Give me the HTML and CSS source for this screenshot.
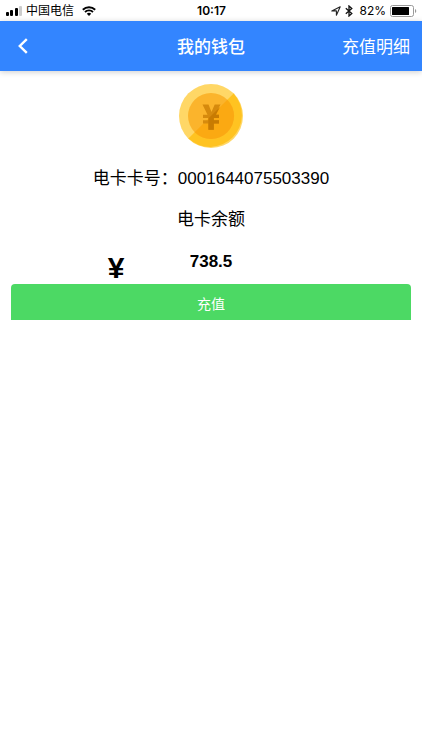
FILE: index.html
```html
<!DOCTYPE html>
<html lang="zh-CN">
<head>
  <meta charset="UTF-8">
  <meta name="viewport" content="width=device-width, initial-scale=1.0">
  <title>我的钱包</title>
  <link rel="stylesheet" href="styles.css">
</head>
<body>
  <div class="status-bar">
    <div class="status-left">
      <svg class="signal" width="17" height="10" viewBox="0 0 17 10">
        <rect x="0" y="6" width="3" height="4" rx="1"/>
        <rect x="4" y="4" width="3" height="6" rx="1"/>
        <rect x="9" y="2" width="3" height="8" rx="1"/>
        <rect x="13" y="0" width="3" height="10" rx="1" fill="#ccc"/>
      </svg>
      <span class="carrier">中国电信</span>
      <svg width="14" height="10" viewBox="0 0 14 10">
        <path d="M0.8 3.7a9 9 0 0 1 12.4 0M3 6a5.8 5.8 0 0 1 8 0" fill="none" stroke="#000" stroke-width="1.9"/>
        <path d="M7 10 4.8 7.7a3.2 3.2 0 0 1 4.4 0z"/>
      </svg>
    </div>
    <span class="time">10:17</span>
    <div class="status-right">
      <svg width="10" height="10" viewBox="0 0 10 10">
        <path d="M0.8 4.9 9.2 0.8 5.4 9.2V4.9z" fill="none" stroke="#222" stroke-width="1.1" stroke-linejoin="round"/>
      </svg>
      <svg class="bluetooth" width="8" height="12" viewBox="0 0 8 12">
        <path d="M0.8 3.3 6.8 8.5 4 11V1l2.8 2.5-6 5.2" fill="none" stroke="#111" stroke-width="1.3"/>
      </svg>
      <span class="percent">82%</span>
      <svg width="27" height="12" viewBox="0 0 27 12">
        <rect x="0.5" y="0.5" width="23" height="11" rx="2" fill="none" stroke="#999"/>
        <rect x="2" y="2" width="17" height="8" rx="0.5"/>
        <path d="M25 4a2.2 2.2 0 0 1 0 4z" fill="#999"/>
      </svg>
    </div>
  </div>

  <header class="nav">
    <button class="back" type="button" aria-label="返回">
      <svg width="10" height="16" viewBox="0 0 10 16">
        <path d="M8.8 1.2 1.8 8l7 6.8" fill="none" stroke="#fff" stroke-width="2.4"/>
      </svg>
    </button>
    <h1>我的钱包</h1>
    <a class="detail" href="#">充值明细</a>
  </header>

  <main class="wallet">
    <svg class="coin" width="64" height="64" viewBox="0 0 64 64">
      <circle cx="32" cy="32" r="32" fill="#ffd766"/>
      <path d="M54.6 9.4A32 32 0 0 1 9.4 54.6z" fill="#ffc321"/>
      <circle cx="32" cy="32" r="23" fill="#fbb42c"/>
      <path d="M48.3 15.7A23 23 0 0 1 15.7 48.3z" fill="#fba912"/>
      <path d="M23.5 20.5h6l3 7.5 3.2-7.5h5.8l-5.3 10.2H40v3.2h-5.2v2.3H40v3.3h-5.2v6.3h-5.4v-6.3H24v-3.3h5.4v-2.3H24v-3.2h4.5z" fill="#d68a0d"/>
      <path d="M41 23 37 30.7H40v3.2h-5.2v2.3H40v3.3h-5.2v6.3h-5.4V34.6z" fill="#c87b02"/>
    </svg>
    <p>电卡卡号：0001644075503390</p>
    <p>电卡余额</p>
    <div class="balance">
      <span class="currency">¥</span>
      <strong>738.5</strong>
    </div>
    <button class="recharge" type="button">充值</button>
  </main>
</body>
</html>
```

FILE: styles.css
```css
* { box-sizing: border-box; }
body { margin: 0; background: #fff; color: #000; font-family: "Liberation Sans", "Noto Sans CJK SC", sans-serif; font-size: 17px; }
button { border: 0; font-family: inherit; cursor: pointer; }
svg { display: block; flex-shrink: 0; }

.status-bar { display: grid; grid-template-columns: 1fr auto 1fr; align-items: center; height: 21px; padding: 0 5px 0 6px; font-family: Inter, "Noto Sans CJK SC", sans-serif; font-size: 12px; line-height: 20px; }
.status-left, .status-right { display: flex; align-items: center; }
.status-right { justify-content: flex-end; gap: 4px; }
.carrier { margin: 0 8px 0 3px; }
.percent { margin-left: 2px; }
.time { font-weight: 600; }

.nav { display: grid; grid-template-columns: 1fr auto 1fr; align-items: center; height: 50px; padding: 0 12px 2px; background: #3385ff; color: #fff; box-shadow: 0 1px 6px rgba(0,0,0,0.2); }
.nav h1 { margin: 0; font-size: 17px; font-weight: 500; }
.back { justify-self: start; padding: 8px 6px 6px; background: none; }
.detail { justify-self: end; color: #fff; text-decoration: none; }

.wallet { padding: 13px 11px; text-align: center; }
.coin { margin: 0 auto 18px; }
.wallet p { margin: 0 0 16px; line-height: 25px; }
.balance { display: grid; grid-template-columns: 1fr 1fr 1fr; height: 36px; line-height: 28px; }
.currency { padding-right: 20px; font-size: 30px; font-weight: bold; line-height: 40px; text-align: right; }
.recharge { display: block; width: 100%; height: 36px; padding: 2px 0 0; border-radius: 4px 4px 0 0; background: #4cd964; color: #fff; font-size: 14px; }
```
